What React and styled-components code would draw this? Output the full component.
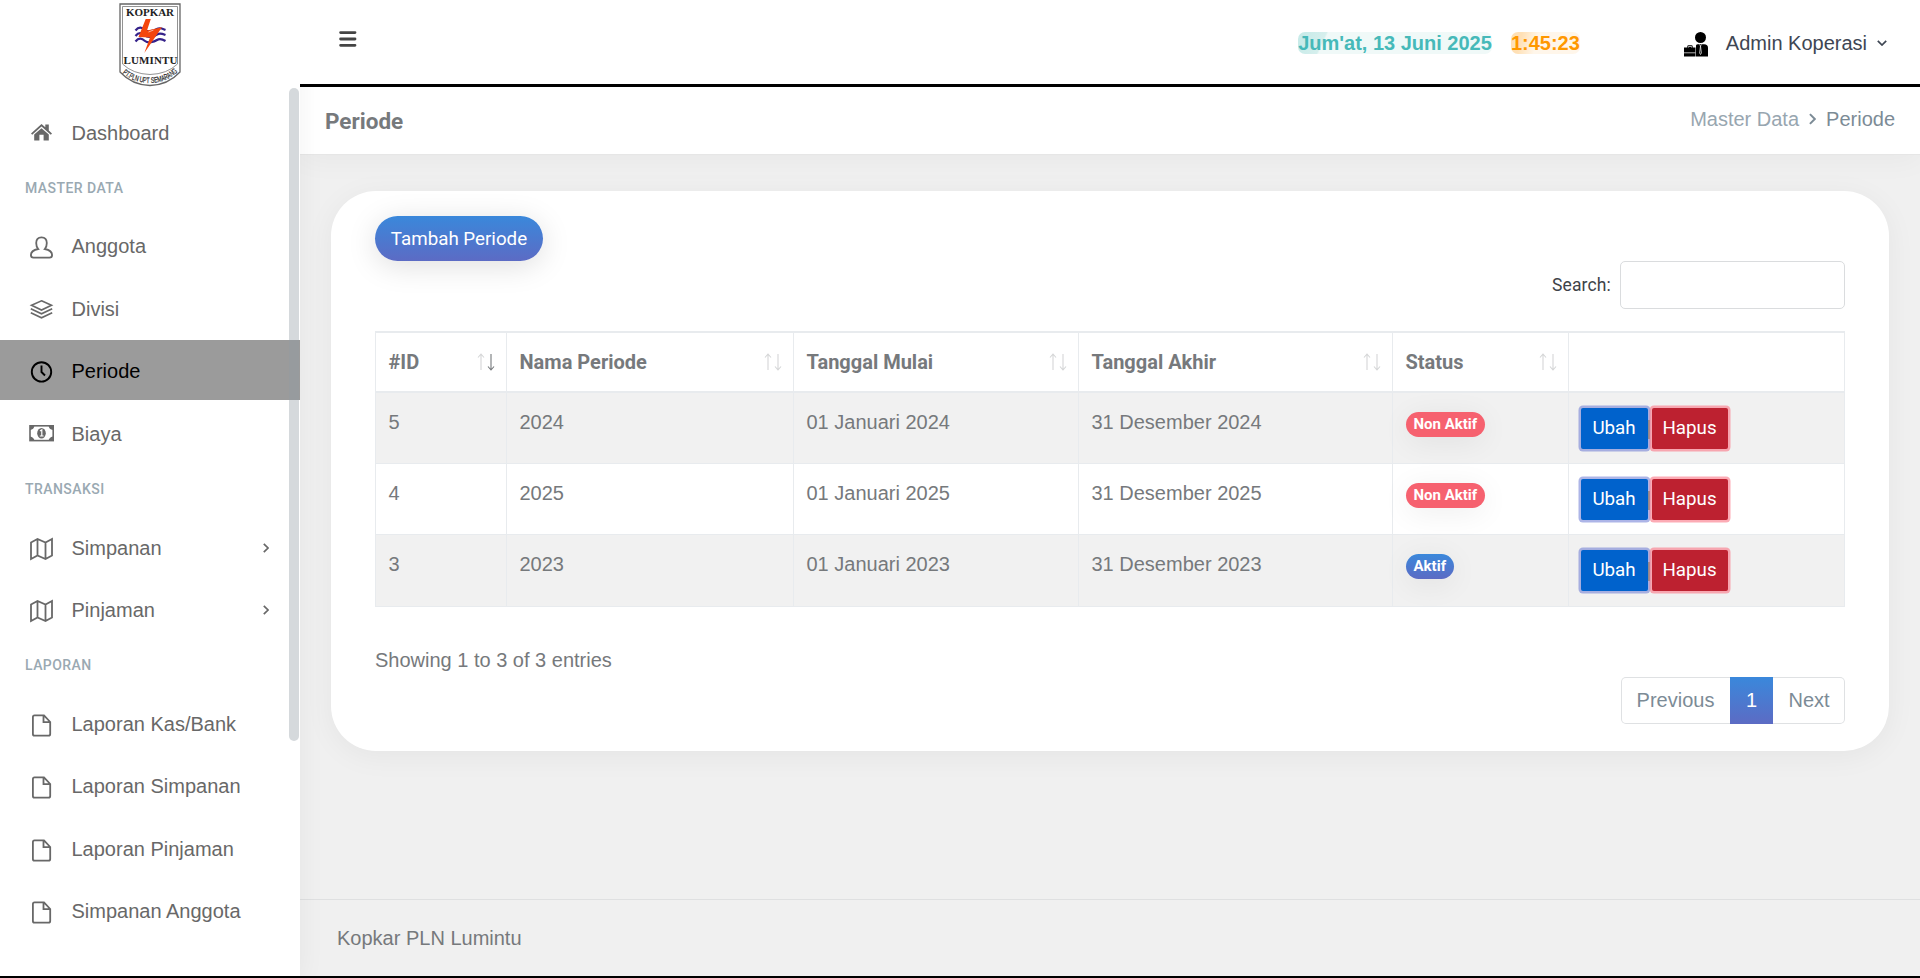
import React from "react";
import styled, { createGlobalStyle, css } from "styled-components";

const Global = createGlobalStyle`
  *, *::before, *::after { box-sizing: border-box; }
  body {
    margin: 0;
    background: #f0f0f0;
    color: #76797c;
    font: 20px/30px "Liberation Sans", Arial, sans-serif;
    overflow: hidden;
  }
`;

const Page = styled.div`
  display: flex;
  width: 1920px;
  height: 978px;
  border-bottom: 2px solid #000;
  overflow: hidden;
`;

const Sidebar = styled.aside`
  position: relative;
  z-index: 2;
  flex: 0 0 300px;
  display: flex;
  flex-direction: column;
  background: #fff;
  box-shadow: 1px 3px 25px rgba(0, 0, 0, 0.05);
`;

const Brand = styled.div`
  height: 87px;
  padding: 3px 0 0 119px;
  svg { display: block; overflow: visible; }
`;

const Nav = styled.nav`
  flex: 1;
  padding-top: 14.6px;
`;

const NavHeading = styled.div`
  height: 51.5px;
  padding: 9px 25px 0;
  font: 500 14px/30px Roboto, sans-serif;
  letter-spacing: 0.45px;
  color: #9aa9b2;
`;

const NavItem = styled.div`
  display: flex;
  align-items: center;
  height: 60px;
  margin-bottom: 2.4px;
  padding: 0 31px 0 29px;
  color: #686868;
  ${(p) => p.$active && css`
    background: #9b9b9b;
    color: #000;
  `}
`;

const NavIcon = styled.svg`
  flex: 0 0 26px;
  height: 30px;
  margin-right: 16.5px;
  fill: none;
  stroke: currentColor;
  stroke-width: 1.8px;
`;

const NavLabel = styled.span`
  flex: 1;
  padding-top: 2px;
  white-space: nowrap;
`;

const ScrollThumb = styled.div`
  position: absolute;
  top: 88px;
  right: 1px;
  width: 10px;
  height: 653px;
  border-radius: 5px;
  background: rgba(144, 155, 163, 0.38);
`;

const Main = styled.main`
  flex: 1;
  display: flex;
  flex-direction: column;
  min-width: 0;
`;

const TopBar = styled.header`
  position: relative;
  z-index: 3;
  display: flex;
  align-items: center;
  height: 87px;
  padding: 0 33px 0 39px;
  background: #fff;
  border-bottom: 3px solid #000;
`;

const MenuButton = styled.div`
  display: flex;
  flex: 1;
  margin-top: -6px;
`;

const Clock = styled.strong`
  height: 22px;
  margin: 2px ${(p) => p.$gap}px 0 0;
  border-radius: 7px;
  line-height: 22px;
  white-space: nowrap;
  color: ${(p) => p.$color};
  background: ${(p) => p.$bg};
`;

const Account = styled.div`
  display: flex;
  align-items: center;
  padding-top: 2px;
  color: #3e4653;
`;

const AccountName = styled.span`
  margin: 0 10px 0 18px;
  white-space: nowrap;
`;

const TitleBar = styled.div`
  position: relative;
  display: flex;
  justify-content: space-between;
  height: 68px;
  padding: 0 25px;
  background: #fff;
  border-bottom: 1px solid #e6e6e6;
  box-shadow: 0 5px 30px rgba(0, 0, 0, 0.04);
`;

const Title = styled.h1`
  margin: 0;
  font: 700 22.5px/68px Roboto, sans-serif;
`;

const Breadcrumb = styled.div`
  display: flex;
  align-items: center;
  gap: 10px;
  height: 64px;
  color: #7c8b96;
`;

const Crumb = styled.span`
  color: #98a6b0;
`;

const Content = styled.section`
  flex: 1;
  padding: 36px 31px 0;
`;

const Card = styled.div`
  height: 560px;
  padding: 25px 44px 0;
  border-radius: 45px;
  background: #fff;
  box-shadow: 0 5px 30px rgba(0, 0, 0, 0.05);
`;

const AddButton = styled.button`
  display: block;
  width: 168px;
  height: 45px;
  padding: 0;
  border: 0;
  border-radius: 23px;
  font: 400 18.75px/30px Roboto, sans-serif;
  color: #fff;
  background: linear-gradient(#3a88db, #5c6bc4);
  box-shadow: 0 5px 30px rgba(0, 0, 0, 0.13);
`;

const SearchRow = styled.label`
  display: flex;
  justify-content: flex-end;
  align-items: center;
  gap: 9px;
  font: 17.5px/26px Roboto, sans-serif;
  letter-spacing: 0.15px;
  color: #3e4348;
`;

const SearchInput = styled.input`
  width: 225px;
  height: 48px;
  border: 1px solid #dadcde;
  border-radius: 5px;
  background: #fff;
`;

const Table = styled.table`
  width: 1470px;
  margin-top: 22px;
  border-collapse: separate;
  border-spacing: 0;
  table-layout: fixed;
  border-left: 1px solid #e8ebee;
  border-top: 1px solid #e8ebee;
`;

const Th = styled.th`
  height: 61px;
  width: ${(p) => p.$w}px;
  padding: 0 11px 0 12.5px;
  border-right: 1px solid #e8ebee;
  border-top: 1px solid #e8ebee;
  border-bottom: 2px solid #e8ebee;
  font: 700 20px/30px Roboto, sans-serif;
  text-align: left;
`;

const HeadCell = styled.div`
  display: flex;
  align-items: center;
  justify-content: space-between;
`;

const Tr = styled.tr`
  background: ${(p) => (p.$striped ? "#f1f1f1" : "#fff")};
`;

const Td = styled.td`
  height: ${(p) => p.$h}px;
  padding: ${(p) => (p.$actions ? "15px 12px 0" : "14px 12.5px 0")};
  border-right: 1px solid #e8ebee;
  border-bottom: 1px solid #e8ebee;
  vertical-align: top;
`;

const Badge = styled.span`
  display: block;
  width: fit-content;
  height: 25px;
  margin-top: 5px;
  padding: 0 7.5px 0 8px;
  border-radius: 12.5px;
  font: 700 15px/24px Roboto, sans-serif;
  color: #fff;
  background: ${(p) => (p.$active ? "linear-gradient(#3a88db, #5c6bc4)" : "#f6616f")};
  box-shadow: 0 5px 30px rgba(0, 0, 0, 0.07);
`;

const Actions = styled.div`
  display: flex;
  align-items: center;
`;

const Separator = styled.span`
  width: 4px;
  height: 19px;
  margin-top: 2px;
  border-left: 2px solid #8f8b8f;
`;

const ActionButton = styled.button`
  width: ${(p) => (p.$danger ? 76 : 67)}px;
  height: 41px;
  padding: 0 1px 2px 0;
  border: 0;
  border-radius: 2px;
  font: 400 18.75px/30px Roboto, sans-serif;
  color: #fff;
  background: ${(p) => (p.$danger ? "#bd2130" : "#0062cc")};
  box-shadow: 0 0 0 2.5px ${(p) => (p.$danger ? "rgba(250, 120, 135, 0.62)" : "rgba(92, 107, 208, 0.5)")};
`;

const Summary = styled.div`
  margin-top: 38px;
`;

const PagerRow = styled.div`
  display: flex;
  justify-content: flex-end;
  margin-top: 2px;
`;

const Pager = styled.div`
  display: flex;
  width: 224px;
  height: 47px;
  border-radius: 5px;
  box-shadow: inset 0 0 0 1px #dfe1e3;
  color: #7c8b96;
`;

const PageItem = styled.span`
  flex: 0 0 ${(p) => p.$w}px;
  text-align: center;
  line-height: 46px;
  ${(p) => p.$active && css`
    color: #fff;
    background: linear-gradient(#3a88db, #5c6bc4);
  `}
`;

const Footer = styled.footer`
  height: 77px;
  padding: 23px 37px 0;
  border-top: 1px solid #dfe0e1;
`;

const Logo = () => (
  <svg width="62" height="84" viewBox="0 0 62 84">
    <path d="M1 1H61V69Q49 82 31 82.500Q13 82 1 69Z" fill="#fff" stroke="#666" strokeWidth="1.300" />
    <path d="M3.500 3.500H58.500V61Q48 71 31 71.500Q14 71 3.500 61Z" fill="none" stroke="#777" strokeWidth="0.800" />
    <text x="31" y="12.800" fontFamily="Liberation Serif, serif" fontWeight="700" fontSize="11" textAnchor="middle" textLength="48" fill="#222">KOPKAR</text>
    <g fill="none" stroke="#35228a" strokeWidth="2.200">
      <path d="M16.500 27.500C20 23 23 24.500 26 27S35 28 38 26S44 26 46.500 27" />
      <path d="M16.500 33C20 28.500 23 30 26 32.500S35 33.500 38 31.500S44 31 46.500 32" />
      <path d="M16.500 38.500C20 34 23 35.500 26 38S35 39 38 37S44 36.500 46.500 38" />
    </g>
    <path d="M26.700 16H31.800L28 27.500L43 24.300L25.300 50L31 34.500L19.500 34Z" fill="#f4450c" />
    <path d="M34.500 27L29.500 29" fill="none" stroke="#fff" strokeWidth="0.600" />
    <text x="31.500" y="61" fontFamily="Liberation Serif, serif" fontWeight="700" fontSize="11" textAnchor="middle" textLength="54" fill="#222">LUMINTU</text>
    <path id="logo-arc" d="M2.500 69.500Q14 80 31 80Q48 80 60 67.500" fill="none" />
    <text fontFamily="Liberation Sans, sans-serif" fontSize="8" fill="#222" stroke="#222" strokeWidth="0.200">
      <textPath href="#logo-arc" startOffset="1" textLength="61" lengthAdjust="spacingAndGlyphs">PT.PLN UPT SEMARANG</textPath>
    </text>
  </svg>
);

const Chevron = ({ down, width = 6, height = 10, stroke = 1.7 }) => (
  <svg width={down ? height : width} height={down ? width : height} viewBox={down ? "0 0 10 6" : "0 0 6 10"}>
    <path d={down ? "M.8 .8l4.200 4.200 4.200-4.200" : "M.8 .8l4.200 4.200-4.200 4.200"} fill="none" stroke="currentColor" strokeWidth={stroke} />
  </svg>
);

const NavChevron = styled.span`
  display: flex;
  padding-top: 3px;
`;

const MenuIcon = () => (
  <svg width="18" height="16" viewBox="0 0 18 16" stroke="#444" strokeWidth="2.800" strokeLinecap="round">
    <path d="M1.600 1.600H16M1.600 8H16M1.600 14.300H16" />
  </svg>
);

const AdminGlyph = styled.svg`
  margin-top: 2px;
`;

const AdminIcon = () => (
  <AdminGlyph width="24" height="25" viewBox="0 0 24 25">
    <circle cx="16.500" cy="5.500" r="5.500" />
    <path d="M12 13.500Q12.200 12.300 14 12.300H20Q24 12.300 24 16V24.500H12Z" />
    <path d="M0 15.500H3.300V14.500Q3.300 13.300 4.500 13.300H7.500Q8.700 13.300 8.700 14.500V15.500H11.500V24.500H0Z" />
    <path d="M4.500 15.500V14.500H7.500V15.500M0 20.800H11.500" stroke="#fff" strokeWidth="0.700" fill="none" />
    <path d="M15.500 12.500L16.500 14L17.500 12.500M16.500 14L15.600 21L16.500 22.500L17.400 21Z" fill="none" stroke="#fff" strokeWidth="0.700" />
  </AdminGlyph>
);

const SortIcon = ({ sorted }) => (
  <svg width="18" height="18" viewBox="0 0 18 18" fill="none" strokeWidth="1.100">
    <path d="M4 17V1M1 4.500L4 1L7 4.500" stroke="#d5d6d7" />
    <path d="M14 1V17M11 13.500L14 17L17 13.500" stroke={sorted ? "#76797c" : "#d5d6d7"} />
  </svg>
);

const ICONS = {
  home: (
    <g fill="currentColor" stroke="none">
      <path d="M12.500 7L16.300 10.300V7.600H19.800V13.500L23 16.400L21.800 17.700L12.500 9.600L3.200 17.700L2 16.400Z" />
      <path d="M12.500 11.200L19.800 17.500V23.400H14.600V17.800H10.400V23.400H5.200V17.500Z" />
    </g>
  ),
  user: <path d="M12.500 7.300C8.900 7.300 7.200 9.600 7.200 13C7.200 15.500 7.900 17.600 9.200 19C5.500 19.800 1.900 21 1.900 25C1.900 27 2.700 27.600 4.500 27.600H20.500C22.300 27.600 23.100 27 23.100 25C23.100 21 19.500 19.800 15.800 19C17.100 17.600 17.800 15.500 17.800 13C17.800 9.600 16.100 7.300 12.500 7.300Z" />,
  layers: (
    <g strokeWidth="1.600">
      <path d="M12.500 7.800L22.500 12.300L12.500 17L2.500 12.300Z" />
      <path d="M1.800 15.800L12.500 20.800L23.200 15.800M1.800 19.800L12.500 24.800L23.200 19.800" />
    </g>
  ),
  clock: <g strokeWidth="1.900"><circle cx="12.500" cy="16.900" r="9.700" /><path d="M12.500 10.500V17L16 20.500" /></g>,
  money: (
    <g>
      <rect x="1" y="7.800" width="23.200" height="14.800" strokeWidth="1.600" />
      <path d="M1 7.500H5.500Q5 11.500 1 12ZM24 7.500H19.500Q20 11.500 24 12ZM1 23H5.500Q5 19 1 18.500ZM24 23H19.500Q20 19 24 18.500Z" fill="currentColor" stroke="none" />
      <ellipse cx="12.500" cy="15.200" rx="4.300" ry="5.300" fill="currentColor" stroke="none" />
      <path d="M11 13L12.800 11.800V18M10.800 18H14.600" stroke="#fff" strokeWidth="1.200" />
    </g>
  ),
  map: <path d="M2 10.500L8.500 7L16.500 10.500L23 7V23.500L16.500 27L8.500 23.500L2 27ZM8.500 7V23.500M16.500 10.500V27" strokeWidth="1.800" />,
  file: <path d="M5.500 7.400H15L21.200 14V26Q21.200 27.700 19.500 27.700H5.500Q3.900 27.700 3.900 26V9Q3.900 7.400 5.500 7.400ZM14.500 7.700V14.200H21" strokeWidth="1.800" />,
};

const NAV = [
  { label: "Dashboard", icon: "home" },
  { heading: "MASTER DATA" },
  { label: "Anggota", icon: "user" },
  { label: "Divisi", icon: "layers" },
  { label: "Periode", icon: "clock", active: true },
  { label: "Biaya", icon: "money" },
  { heading: "TRANSAKSI" },
  { label: "Simpanan", icon: "map", more: true },
  { label: "Pinjaman", icon: "map", more: true },
  { heading: "LAPORAN" },
  { label: "Laporan Kas/Bank", icon: "file" },
  { label: "Laporan Simpanan", icon: "file" },
  { label: "Laporan Pinjaman", icon: "file" },
  { label: "Simpanan Anggota", icon: "file" },
];

const COLUMNS = [
  { label: "#ID", width: 131, sorted: true },
  { label: "Nama Periode", width: 287 },
  { label: "Tanggal Mulai", width: 285 },
  { label: "Tanggal Akhir", width: 314 },
  { label: "Status", width: 176 },
  { label: "", width: 276 },
];

const ROWS = [
  { id: 5, name: "2024", active: false, height: 71 },
  { id: 4, name: "2025", active: false, height: 71 },
  { id: 3, name: "2023", active: true, height: 72 },
];

export default function App() {
  return (
    <>
      <Global />
      <Page>
        <Sidebar>
          <Brand><Logo /></Brand>
          <Nav>
            {NAV.map(({ heading, label, icon, active, more }) =>
              heading ? (
                <NavHeading key={heading}>{heading}</NavHeading>
              ) : (
                <NavItem key={label} $active={active}>
                  <NavIcon viewBox="0 0 26 30">{ICONS[icon]}</NavIcon>
                  <NavLabel>{label}</NavLabel>
                  {more && <NavChevron><Chevron /></NavChevron>}
                </NavItem>
              )
            )}
          </Nav>
          <ScrollThumb />
        </Sidebar>
        <Main>
          <TopBar>
            <MenuButton><MenuIcon /></MenuButton>
            <Clock $gap={19} $color="#46b9b9" $bg="linear-gradient(115deg, #c8ebe9 3%, #d6efed 14%, #f0f9f8 15%)">Jum'at, 13 Juni 2025</Clock>
            <Clock $gap={104} $color="#ff9800" $bg="linear-gradient(105deg, #ffe0b5 15%, #fff6ea 38%)">1:45:23</Clock>
            <Account>
              <AdminIcon />
              <AccountName>Admin Koperasi</AccountName>
              <Chevron down />
            </Account>
          </TopBar>
          <TitleBar>
            <Title>Periode</Title>
            <Breadcrumb>
              <Crumb>Master Data</Crumb>
              <Chevron width={7} height={12} />
              <span>Periode</span>
            </Breadcrumb>
          </TitleBar>
          <Content>
            <Card>
              <AddButton>Tambah Periode</AddButton>
              <SearchRow>Search:<SearchInput /></SearchRow>
              <Table>
                <thead>
                  <tr>
                    {COLUMNS.map((c) => (
                      <Th key={c.label} $w={c.width}>
                        {c.label && <HeadCell>{c.label}<SortIcon sorted={c.sorted} /></HeadCell>}
                      </Th>
                    ))}
                  </tr>
                </thead>
                <tbody>
                  {ROWS.map((r, i) => (
                    <Tr key={r.id} $striped={i % 2 === 0}>
                      <Td $h={r.height}>{r.id}</Td>
                      <Td>{r.name}</Td>
                      <Td>01 Januari {r.name}</Td>
                      <Td>31 Desember {r.name}</Td>
                      <Td><Badge $active={r.active}>{r.active ? "Aktif" : "Non Aktif"}</Badge></Td>
                      <Td $actions>
                        <Actions>
                          <ActionButton>Ubah</ActionButton>
                          <Separator />
                          <ActionButton $danger>Hapus</ActionButton>
                        </Actions>
                      </Td>
                    </Tr>
                  ))}
                </tbody>
              </Table>
              <Summary>Showing 1 to 3 of 3 entries</Summary>
              <PagerRow>
                <Pager>
                  <PageItem $w={109}>Previous</PageItem>
                  <PageItem $w={43} $active>1</PageItem>
                  <PageItem $w={72}>Next</PageItem>
                </Pager>
              </PagerRow>
            </Card>
          </Content>
          <Footer>Kopkar PLN Lumintu</Footer>
        </Main>
      </Page>
    </>
  );
}
